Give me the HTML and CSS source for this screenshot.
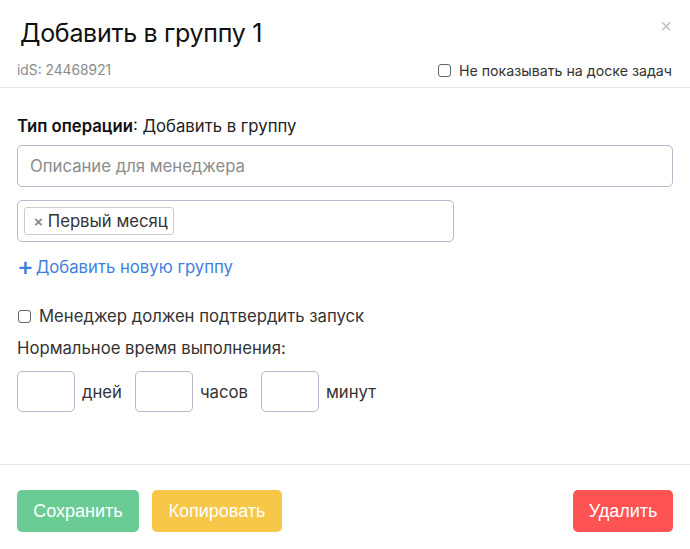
FILE: index.html
```html
<!DOCTYPE html>
<html lang="ru">
<head>
<meta charset="utf-8">
<link rel="stylesheet" href="styles.css">
</head>
<body>
<div class="modal">
  <div class="header">
    <div class="title-row">
      <h1 class="title">Добавить в группу 1</h1>
      <span class="close">×</span>
    </div>
    <div class="sub-row">
      <span class="ids">idS: 24468921</span>
      <label class="hide-check"><span class="cb"></span>Не показывать на доске задач</label>
    </div>
  </div>
  <div class="body">
    <div class="op"><b>Тип операции</b>: Добавить в группу</div>
    <div class="input wide"><span class="ph">Описание для менеджера</span></div>
    <div class="input tags">
      <span class="tag"><span class="tag-x">×</span>Первый месяц</span>
    </div>
    <div class="add-link"><span class="plus">+</span>Добавить новую группу</div>
    <label class="confirm"><span class="cb cb2"></span>Менеджер должен подтвердить запуск</label>
    <div class="normal">Нормальное время выполнения:</div>
    <div class="time-row">
      <span class="tbox"></span><span class="unit">дней</span>
      <span class="tbox"></span><span class="unit">часов</span>
      <span class="tbox"></span><span class="unit">минут</span>
    </div>
  </div>
  <div class="footer">
    <button class="btn save">Сохранить</button>
    <button class="btn copy">Копировать</button>
    <span class="spacer"></span>
    <button class="btn del">Удалить</button>
  </div>
</div>
</body>
</html>
```

FILE: styles.css
```css
* { box-sizing: border-box; }
html, body { margin: 0; padding: 0; background: #fff; }
body { font-family: Inter, "Noto Sans", sans-serif; color: #222; width: 690px; height: 549px; overflow: hidden; }
.modal { width: 690px; }
.header { border-bottom: 1px solid #e5e5e5; padding: 0 17px 0 17px; height: 88px; }
.title-row { display: flex; justify-content: space-between; align-items: flex-start; height: 56px; }
.title { margin: 0; padding: 15px 0 0 3px; font-weight: 400; font-size: 25px; letter-spacing: -0.3px; color: #111; line-height: 36px; }
.close { color: #c4c4c4; font-size: 20px; line-height: 20px; margin-top: 16px; margin-right: 1px; font-family: "Liberation Sans", sans-serif; }
.sub-row { display: flex; justify-content: space-between; align-items: center; height: 28px; }
.ids { font-size: 13.8px; color: #8a8a8a; }
.hide-check { display: flex; align-items: center; font-size: 14.2px; color: #333; margin-right: 1px; }
.cb { display: inline-block; width: 13px; height: 13px; border: 1px solid #666; border-radius: 3px; margin-right: 8px; }
.body { padding: 28px 17px 0 17px; height: 377px; border-bottom: 1px solid #e5e5e5; }
.op { font-size: 16.7px; line-height: 20px; color: #222; margin-bottom: 9px; }
.op b { font-weight: 600; color: #111; }
.input { border: 1px solid #b9b7c9; border-radius: 5px; height: 42px; display: flex; align-items: center; }
.wide { width: 656px; padding-left: 12px; margin-bottom: 13px; }
.ph { color: #8c8c8c; font-size: 16.7px; }
.tags { width: 437px; padding-left: 6px; margin-bottom: 15px; }
.tag { display: inline-flex; align-items: center; height: 28px; border: 1px solid #ccc; border-radius: 3px; padding: 0 5px 0 9px; font-size: 16.7px; color: #333; }
.tag-x { color: #888; font-weight: 700; font-size: 15px; margin-right: 5px; font-family: "Liberation Sans", sans-serif; }
.add-link { color: #3d7fe0; font-size: 16.7px; display: flex; align-items: center; height: 22px; margin-bottom: 28px; margin-top: -1px; }
.plus { font-size: 25px; font-weight: 500; margin-right: 2px; line-height: 20px; margin-top: -3px; }
.confirm { display: flex; align-items: center; font-size: 16.7px; color: #333; height: 20px; margin-bottom: 12px; margin-top: 1px; }
.cb2 { margin-left: 1px; margin-right: 8px; width: 13px; height: 13px; }
.normal { font-size: 16.7px; color: #333; height: 20px; margin-bottom: 13px; }
.time-row { display: flex; align-items: center; }
.tbox { width: 58px; height: 41px; border: 1px solid #b9b7c9; border-radius: 5px; }
.unit { font-size: 16.7px; color: #333; margin-left: 7px; margin-right: 13px; }
.footer { display: flex; align-items: center; padding: 25px 17px 0 17px; }
.spacer { flex: 1; }
.btn { border: none; border-radius: 5px; height: 42px; color: #fff; font-family: "Liberation Sans", Arial, sans-serif; font-size: 18px; padding: 0; }
.save { background: #6acb94; width: 122px; margin-right: 13px; }
.copy { background: #f6c748; width: 130px; }
.del { background: #fd5353; width: 100px; }
```
